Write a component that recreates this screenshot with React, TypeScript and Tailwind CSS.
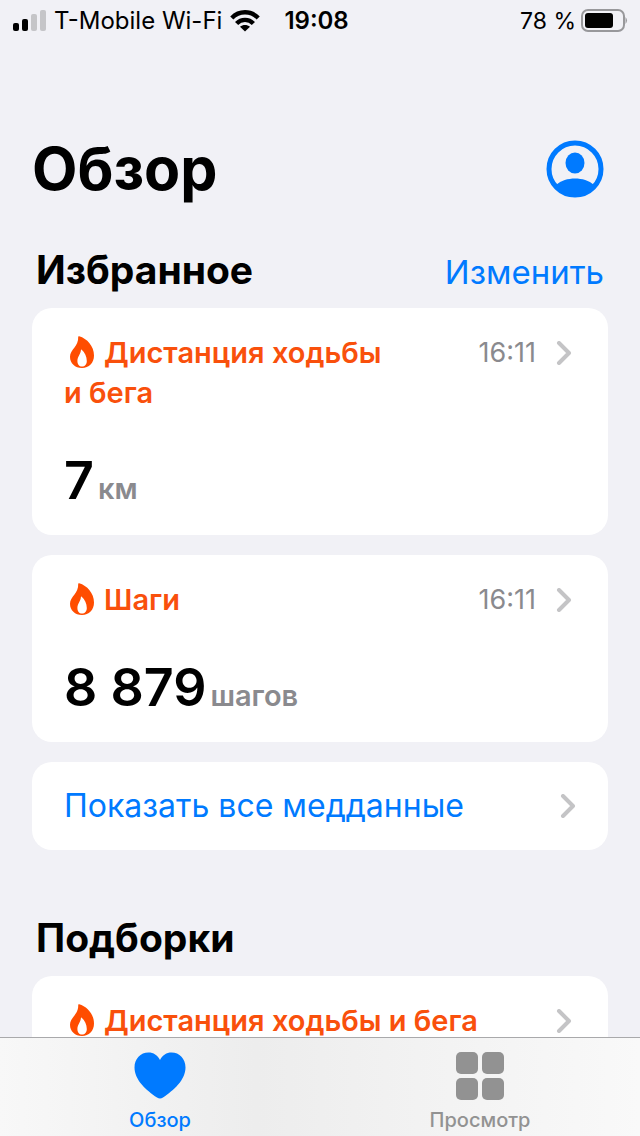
import React from "react";

const Flame: React.FC = () => (
  <svg className="-mt-1 mr-2.5 mb-0.5 ml-1.5 inline h-8 w-6 align-middle" viewBox="0 0 24 32" fill="#ff4d00" aria-hidden="true">
    <path
      fillRule="evenodd"
      d="M8.200 0.800C8.200 0.200 8.600 0 9.200 0.200C17 2.500 24 10 24 19.500C24 27 19 32 12 32C5 32 0 27.500 0 20.800C0 13.500 8.800 10.500 8.200 0.800ZM11.700 13.800C11.300 13.400 10.900 13.600 10.900 14.200C10.600 18.500 7.400 20.500 7.400 25C7.400 28.400 9.200 30.600 12 30.600C14.800 30.600 16.800 28.400 16.800 25C16.800 20.800 14.800 16.600 11.700 13.800Z"
    />
  </svg>
);

const Chevron: React.FC = () => (
  <svg className="h-6 w-4 shrink-0" viewBox="0 0 16 24" fill="none" stroke="#c4c4c6" strokeWidth="4" strokeLinecap="round" strokeLinejoin="round" aria-hidden="true">
    <path d="M3 2L13 12L3 22" />
  </svg>
);

type CardProps = {
  title: string;
  time?: string;
  value?: string;
  unit?: string;
};

const Card: React.FC<CardProps> = ({ title, time, value, unit }) => {
  return (
    <a href="#" className="block rounded-[20px] bg-white px-8 pt-[25px] pb-[22px]">
      <div className="flex items-start justify-between gap-4">
        <h3 className="text-[29px] leading-10 font-semibold text-[#f9500c]">
          <Flame />
          {title}
        </h3>
        <div className="flex h-10 shrink-0 items-center gap-5 pr-1">
          {time && <span className="text-[27px] text-[#8a8a8e]">{time}</span>}
          <Chevron />
        </div>
      </div>
      {value && (
        <p className="mt-9 flex items-baseline gap-1 leading-16">
          <span className="text-[52px] font-semibold text-black">{value}</span>
          <span className="text-[29px] leading-none font-semibold text-[#8a8a8e]">{unit}</span>
        </p>
      )}
    </a>
  );
};

const StatusBar: React.FC = () => {
  return (
    <div className="flex h-10 shrink-0 items-center justify-between px-3 pt-0.5 text-black">
      <div className="flex items-center text-[24px]">
        <svg className="mr-2 h-[22px] w-[34px]" viewBox="0 0 34 22" aria-hidden="true">
          <rect x="1" y="13" width="6" height="8" rx="2" />
          <rect x="10" y="9" width="6" height="12" rx="2" />
          <rect x="19" y="4" width="6" height="17" rx="2" fill="#c5c5c8" />
          <rect x="28" y="0" width="6" height="21" rx="2" fill="#c5c5c8" />
        </svg>
        <span>T-Mobile Wi-Fi</span>
        <svg className="mr-6 ml-2 h-[22px] w-[30px]" viewBox="0 0 30 22" aria-hidden="true">
          <g fill="none" stroke="#000" strokeWidth="4.400">
            <path d="M1.800 8C9.200 0.400 20.800 0.400 28.200 8" />
            <path d="M6.600 13.500C11.200 8.700 18.800 8.700 23.400 13.500" />
          </g>
          <path d="M10 16.800C12.800 14.300 17.200 14.300 20 16.800L15 21.500Z" />
        </svg>
        <span className="font-semibold">19:08</span>
      </div>
      <div className="flex items-center gap-1 text-[23px]">
        <span>78 %</span>
        <svg className="h-6 w-12" viewBox="0 0 48 24" aria-hidden="true">
          <rect x="2" y="1" width="42" height="21" rx="6" fill="none" stroke="#98989b" strokeWidth="2" />
          <rect x="5" y="4" width="28" height="15" rx="3" />
          <path d="M45.500 8Q48.500 11.500 45.500 15Z" fill="#98989b" />
        </svg>
      </div>
    </div>
  );
};

const App: React.FC = () => {
  return (
    <div className="flex h-dvh flex-col overflow-hidden bg-[#f1f1f6] font-['Inter','Noto_Sans',sans-serif]">
      <StatusBar />

      <main className="min-h-0 flex-1 overflow-y-auto px-8 pt-[90px] [scrollbar-width:none]">
        {/* Page title */}
        <div className="flex items-center justify-between pr-1">
          <h1 className="text-[59px] leading-[78px] font-bold text-black">Обзор</h1>
          <button type="button" aria-label="Профиль">
            <svg className="h-[58px] w-[58px]" viewBox="0 0 58 58" fill="#007aff" aria-hidden="true">
              <circle cx="29" cy="29" r="26" fill="none" stroke="#007aff" strokeWidth="5" />
              <ellipse cx="29" cy="23" rx="9.500" ry="10.500" />
              <path d="M10 45C15 40.500 22 38.500 29 38.500C36 38.500 43 40.500 48 45C43 52 36 55 29 55C22 55 15 52 10 45Z" />
            </svg>
          </button>
        </div>

        {/* Favourites */}
        <section>
          <div className="mt-[38px] flex items-baseline justify-between px-1 leading-12">
            <h2 className="text-[39px] font-bold text-black">Избранное</h2>
            <button type="button" className="text-[33px] text-[#007aff]">
              Изменить
            </button>
          </div>
          <div className="mt-3 flex flex-col gap-5">
            <Card title={"Дистанция ходьбы и\u00a0бега"} time="16:11" value="7" unit="км" />
            <Card title="Шаги" time="16:11" value="8 879" unit="шагов" />
            <a href="#" className="flex h-[88px] items-center justify-between rounded-[20px] bg-white px-8 text-[32px] text-[#007aff]">
              Показать все медданные
              <Chevron />
            </a>
          </div>
        </section>

        {/* Highlights */}
        <section className="mt-16">
          <h2 className="px-1 text-[39px] leading-12 font-bold text-black">Подборки</h2>
          <div className="mt-3.5">
            <Card title={"Дистанция ходьбы и\u00a0бега"} />
          </div>
        </section>
      </main>

      {/* Tab bar */}
      <nav className="grid h-[99px] shrink-0 grid-cols-2 border-t border-[#a9a9ab] bg-linear-to-r from-[#f8f8f8] via-[#ededed] via-40% to-[#f9f9f9] text-[20px] leading-6 font-medium">
        <a href="#" className="flex flex-col items-center gap-2 pt-3.5 text-[#007aff]">
          <svg className="h-12 w-13" viewBox="0 0 52 48" fill="currentColor" aria-hidden="true">
            <path d="M26 8C23.500 3 19.500 0.500 14.500 0.500C6.500 0.500 0.500 6.800 0.500 15.500C0.500 28 12.500 38.500 23 45.500C25 46.700 27 46.700 29 45.500C39.500 38.500 51.500 28 51.500 15.500C51.500 6.800 45.500 0.500 37.500 0.500C32.500 0.500 28.500 3 26 8Z" />
          </svg>
          Обзор
        </a>
        <a href="#" className="flex flex-col items-center gap-2 pt-3.5 text-[#929292]">
          <svg className="h-12 w-12" viewBox="0 0 48 48" fill="currentColor" aria-hidden="true">
            <rect width="22" height="22" rx="5" />
            <rect x="26" width="22" height="22" rx="5" />
            <rect y="26" width="22" height="22" rx="5" />
            <rect x="26" y="26" width="22" height="22" rx="5" />
          </svg>
          Просмотр
        </a>
      </nav>
    </div>
  );
};

export default App;
